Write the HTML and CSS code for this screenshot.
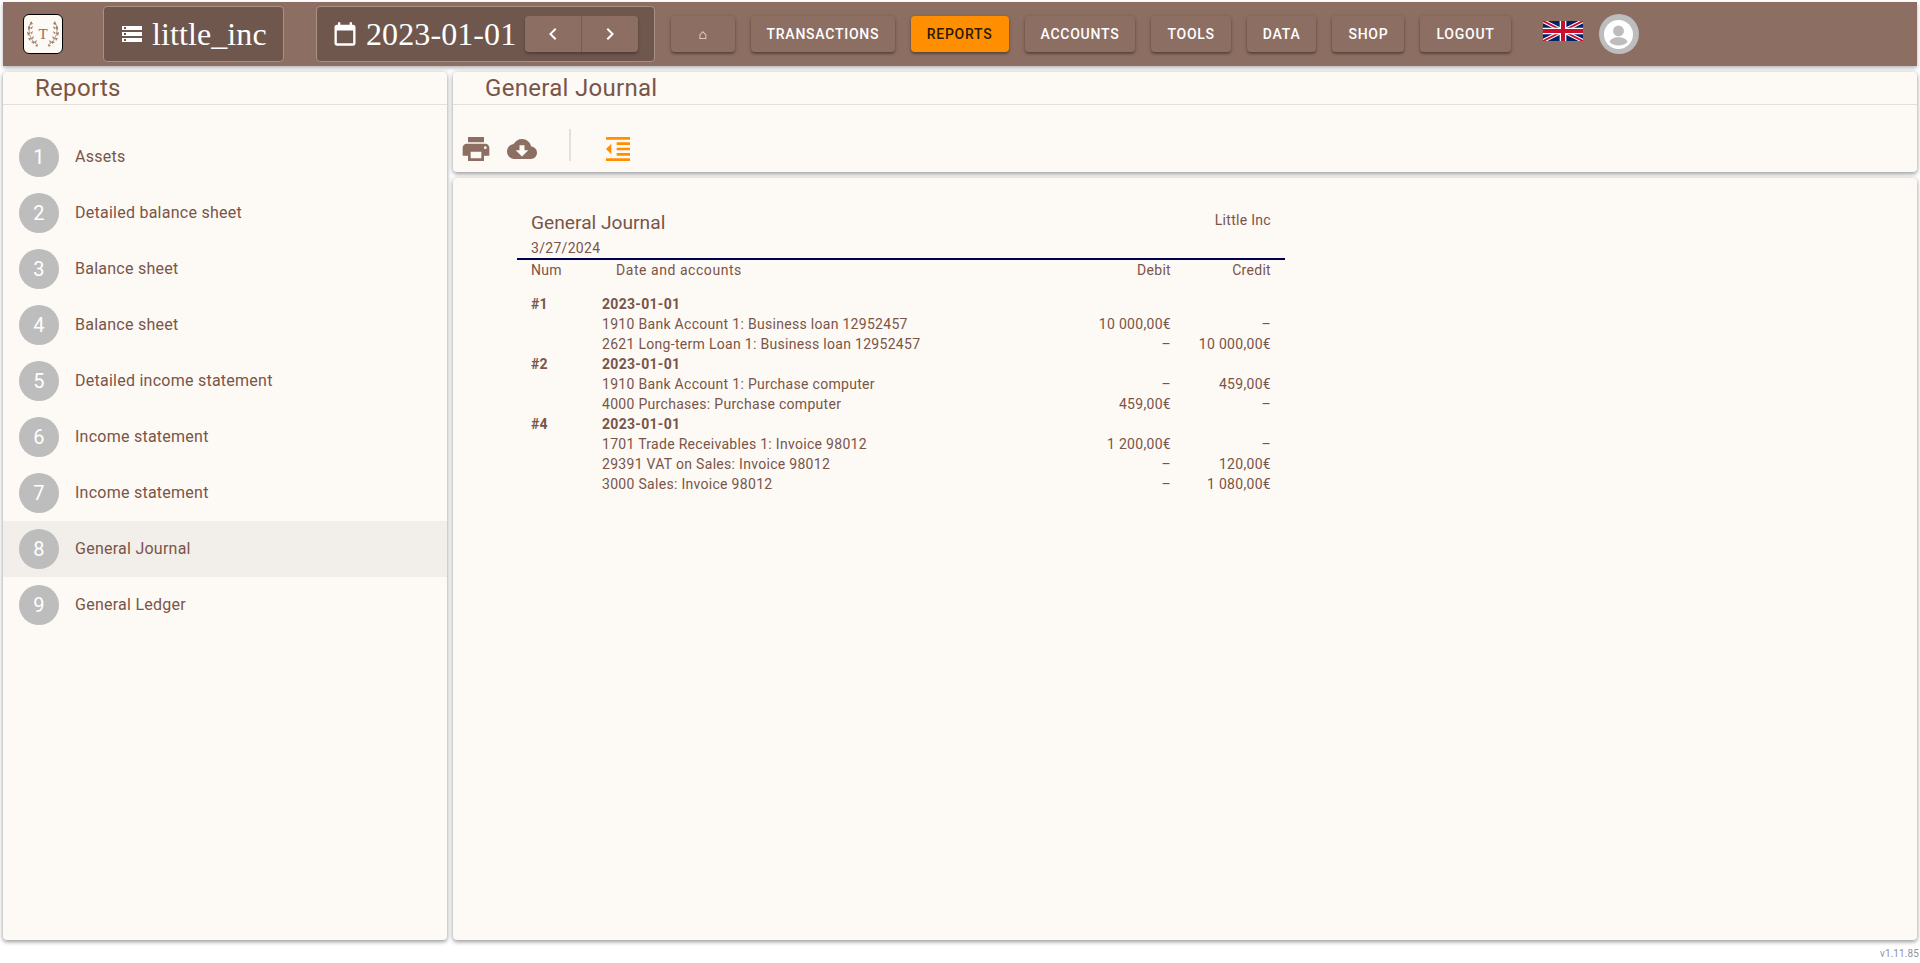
FILE: index.html
```html
<!DOCTYPE html>
<html lang="en">
<head>
  <meta charset="UTF-8" />
  <title>Reports | little_inc</title>
  <link rel="stylesheet" href="styles.css">
</head>
<body>

  <!-- Top bar -->
  <header class="topbar">
    <div class="logo">
      <svg width="38" height="38" viewBox="0 0 38 38">
        <g class="wreath-stem">
          <path d="M7 7C3 15 5 25 14 30"/>
          <path d="M31 7C35 15 33 25 24 30"/>
        </g>
        <g class="wreath-leaf">
          <path d="M7 6l2 3-3 1zM4 11l3 2-3 2zM9 11l-1 3-2-1zM3 17l3 1-2 3zM9 16l-1 3-2-1zM4 23l3 0-1 3zM10 21l-1 3-2-1zM7 27l3-1 0 3zM13 25l-1 3-2-1zM11 30l3 0-1 2z"/>
          <path d="M31 6l-2 3 3 1zM34 11l-3 2 3 2zM29 11l1 3 2-1zM35 17l-3 1 2 3zM29 16l1 3 2-1zM34 23l-3 0 1 3zM28 21l1 3 2-1zM31 27l-3-1 0 3zM25 25l1 3 2-1zM27 30l-3 0 1 2z"/>
        </g>
        <text x="19" y="23.5" class="logo-t">T</text>
      </svg>
    </div>

    <div class="dark-box company">
      <svg class="box-icon" width="24" height="24" viewBox="0 0 24 24"><path d="M2 20h20v-4H2v4zm2-3h2v2H4v-2zM2 4v4h20V4H2zm4 3H4V5h2v2zm-4 7h20v-4H2v4zm2-3h2v2H4v-2z"/></svg>
      <span>little_inc</span>
    </div>

    <div class="dark-box period">
      <svg class="box-icon" width="28" height="28" viewBox="0 0 24 24"><path d="M19 4h-1V2h-2v2H8V2H6v2H5c-1.1 0-2 .9-2 2v14c0 1.1.9 2 2 2h14c1.1 0 2-.9 2-2V6c0-1.1-.9-2-2-2zm0 16H5V9h14v11z"/></svg>
      <span>2023-01-01</span>
      <div class="stepper">
        <button class="step"><svg width="24" height="24" viewBox="0 0 24 24"><path d="M15.4 7.4L14 6l-6 6 6 6 1.4-1.4L10.8 12z"/></svg></button>
        <button class="step"><svg width="24" height="24" viewBox="0 0 24 24"><path d="M10 6L8.6 7.4l4.6 4.6-4.6 4.6L10 18l6-6z"/></svg></button>
      </div>
    </div>

    <nav class="nav">
      <button class="nav-btn home">⌂</button>
      <button class="nav-btn tight">Transactions</button>
      <button class="nav-btn active">Reports</button>
      <button class="nav-btn">Accounts</button>
      <button class="nav-btn">Tools</button>
      <button class="nav-btn">Data</button>
      <button class="nav-btn">Shop</button>
      <button class="nav-btn">Logout</button>
    </nav>

    <svg class="flag" width="40" height="20" viewBox="0 0 60 30">
      <rect width="60" height="30" fill="#012169"/>
      <path d="M0 0L60 30M60 0L0 30" stroke="#fff" stroke-width="6"/>
      <path d="M0 0L60 30M60 0L0 30" stroke="#c8102e" stroke-width="3"/>
      <path d="M30 0V30M0 15H60" stroke="#fff" stroke-width="10"/>
      <path d="M30 0V30M0 15H60" stroke="#c8102e" stroke-width="6"/>
    </svg>

    <div class="avatar">
      <svg width="29" height="29" viewBox="0 0 32 32">
        <circle cx="16" cy="16" r="16" fill="#fff"/>
        <circle cx="16" cy="12" r="6" fill="#bdbdbd"/>
        <path d="M6 24c2-4 6-5 10-5s8 1 10 5c-2 3-6 4-10 4s-8-1-10-4z" fill="#bdbdbd"/>
      </svg>
    </div>
  </header>

  <main class="workspace">

    <!-- Report list -->
    <aside class="panel side">
      <h2 class="panel-title">Reports</h2>
      <ul class="report-list">
        <li class="report-item"><span class="num">1</span><span class="item-label">Assets</span></li>
        <li class="report-item"><span class="num">2</span><span class="item-label">Detailed balance sheet</span></li>
        <li class="report-item"><span class="num">3</span><span class="item-label">Balance sheet</span></li>
        <li class="report-item"><span class="num">4</span><span class="item-label">Balance sheet</span></li>
        <li class="report-item"><span class="num">5</span><span class="item-label">Detailed income statement</span></li>
        <li class="report-item"><span class="num">6</span><span class="item-label">Income statement</span></li>
        <li class="report-item"><span class="num">7</span><span class="item-label">Income statement</span></li>
        <li class="report-item selected"><span class="num">8</span><span class="item-label">General Journal</span></li>
        <li class="report-item"><span class="num">9</span><span class="item-label">General Ledger</span></li>
      </ul>
    </aside>

    <section class="content">
      <div class="panel tools">
        <h2 class="panel-title">General Journal</h2>
        <div class="toolbar">
          <svg class="tool print" width="32" height="32" viewBox="0 0 24 24"><path d="M19 8H5c-1.66 0-3 1.34-3 3v6h4v4h12v-4h4v-6c0-1.66-1.34-3-3-3zm-3 11H8v-5h8v5zm3-7c-.55 0-1-.45-1-1s.45-1 1-1 1 .45 1 1-.45 1-1 1zm-1-9H6v4h12V3z"/></svg>
          <svg class="tool cloud" width="30" height="30" viewBox="0 0 24 24"><path d="M19.35 10.04C18.67 6.59 15.64 4 12 4 9.11 4 6.6 5.64 5.35 8.04 2.34 8.36 0 10.91 0 14c0 3.31 2.69 6 6 6h13c2.76 0 5-2.24 5-5 0-2.64-2.05-4.78-4.65-4.96zM17 13l-5 5-5-5h3V9h4v4h3z"/></svg>
          <span class="tool-sep"></span>
          <svg class="tool outdent" width="32" height="32" viewBox="0 0 24 24"><path d="M11 17h10v-2H11v2zm-8-5l4 4V8l-4 4zm0 9h18v-2H3v2zM3 3v2h18V3H3zm8 6h10V7H11v2zm0 4h10v-2H11v2z"/></svg>
        </div>
      </div>

      <div class="panel sheet">
        <div class="report">
          <div class="report-head">
            <div>
              <div class="report-title">General Journal</div>
              <div class="report-date">3/27/2024</div>
            </div>
            <div class="report-org">Little Inc</div>
          </div>
          <div class="report-row columns">
            <span>Num</span><span class="accounts-head">Date and accounts</span><span class="amt">Debit</span><span class="amt">Credit</span>
          </div>
          <div class="report-body">
            <div class="report-row entry"><span>#1</span><span>2023-01-01</span><span></span><span></span></div>
            <div class="report-row"><span></span><span>1910 Bank Account 1: Business loan 12952457</span><span class="amt">10 000,00€</span><span class="amt">–</span></div>
            <div class="report-row"><span></span><span>2621 Long-term Loan 1: Business loan 12952457</span><span class="amt">–</span><span class="amt">10 000,00€</span></div>
            <div class="report-row entry"><span>#2</span><span>2023-01-01</span><span></span><span></span></div>
            <div class="report-row"><span></span><span>1910 Bank Account 1: Purchase computer</span><span class="amt">–</span><span class="amt">459,00€</span></div>
            <div class="report-row"><span></span><span>4000 Purchases: Purchase computer</span><span class="amt">459,00€</span><span class="amt">–</span></div>
            <div class="report-row entry"><span>#4</span><span>2023-01-01</span><span></span><span></span></div>
            <div class="report-row"><span></span><span>1701 Trade Receivables 1: Invoice 98012</span><span class="amt">1 200,00€</span><span class="amt">–</span></div>
            <div class="report-row"><span></span><span>29391 VAT on Sales: Invoice 98012</span><span class="amt">–</span><span class="amt">120,00€</span></div>
            <div class="report-row"><span></span><span>3000 Sales: Invoice 98012</span><span class="amt">–</span><span class="amt">1 080,00€</span></div>
          </div>
        </div>
      </div>
    </section>
  </main>

  <footer class="version">v1.11.85</footer>

</body>
</html>
```

FILE: styles.css
```css
* {
  box-sizing: border-box;
}

html, body {
  margin: 0;
  padding: 0;
  height: 100%;
  overflow: hidden;
  background: #fff;
  color: #795548;
  font-family: Roboto, sans-serif;
}

body {
  padding: 2px 3px 0;
}

/* Top bar */
.topbar {
  display: flex;
  align-items: center;
  height: 64px;
  padding-left: 20px;
  background: #8d6e63;
  box-shadow: 0 2px 4px rgba(0, 0, 0, 0.3);
}

.logo {
  width: 40px;
  height: 40px;
  margin-right: 40px;
  border: 1px solid #000;
  border-radius: 6px;
  background: #fdf9f5;
}

.logo svg {
  display: block;
}

.wreath-stem {
  fill: none;
  stroke: #9c7f6c;
  stroke-width: 0.8;
}

.wreath-leaf {
  fill: #9c7f6c;
}

.logo-t {
  font-family: "Liberation Serif", serif;
  font-size: 15px;
  fill: #8d6e63;
  text-anchor: middle;
}

.dark-box {
  display: flex;
  align-items: center;
  height: 56px;
  border: 1px solid #a99085;
  border-radius: 4px;
  background: #6f574d;
  color: #fff;
  font-family: "Liberation Serif", serif;
  font-size: 32px;
}

.box-icon {
  fill: #fff;
}

.company {
  width: 181px;
  padding-left: 16px;
  margin-right: 32px;
}

.company span {
  margin-left: 8px;
  letter-spacing: 0.1px;
}

.period {
  width: 339px;
  padding-left: 14px;
  margin-right: 16px;
}

.period span {
  margin-left: 7px;
  letter-spacing: 0.1px;
}

.stepper {
  display: flex;
  margin-left: 9px;
  border-radius: 4px;
  box-shadow: 0 2px 3px rgba(0, 0, 0, 0.3);
}

.step {
  display: flex;
  align-items: center;
  justify-content: center;
  width: 57px;
  height: 36px;
  padding: 0;
  border: none;
  background: #8d6e63;
}

.step:first-child {
  border-right: 1px solid #795a4f;
  border-radius: 4px 0 0 4px;
}

.step:last-child {
  width: 56px;
  border-radius: 0 4px 4px 0;
}

.step svg {
  fill: #fff;
}

.nav {
  display: flex;
  gap: 16px;
}

.nav-btn {
  height: 36px;
  padding: 0 16px;
  border: none;
  border-radius: 4px;
  background: #8d6e63;
  color: #fff;
  font-family: Roboto, sans-serif;
  font-size: 14px;
  font-weight: 500;
  letter-spacing: 0.75px;
  text-transform: uppercase;
  box-shadow: 0 2px 2px rgba(0, 0, 0, 0.25), 0 1px 4px rgba(0, 0, 0, 0.2);
}

.nav-btn.home {
  width: 64px;
}

.nav-btn.tight {
  padding: 0 15.5px;
}

.nav-btn.active {
  background: #ff8f00;
  color: #2b1a05;
}

.flag {
  margin-left: 32px;
  margin-top: -6px;
}

.avatar {
  display: flex;
  align-items: center;
  justify-content: center;
  width: 40px;
  height: 40px;
  margin-left: 16px;
  border-radius: 50%;
  background: #bdbdbd;
}

/* Panels */
.workspace {
  display: grid;
  grid-template-columns: 444px 1fr;
  gap: 6px;
  height: 868px;
  margin-top: 6px;
}

.panel {
  background: #fdf9f5;
  border-radius: 4px;
  box-shadow: 0 2px 4px rgba(0, 0, 0, 0.35), 0 0 5px rgba(0, 0, 0, 0.12);
}

.panel-title {
  height: 33px;
  margin: 0;
  padding-left: 32px;
  border-bottom: 1px solid #e3e0dc;
  font-size: 24px;
  font-weight: 400;
  letter-spacing: 0.3px;
  line-height: 32px;
}

.report-list {
  list-style: none;
  margin: 24px 0 0;
  padding: 0;
}

.report-item {
  display: flex;
  align-items: center;
  height: 56px;
  padding-left: 16px;
  font-size: 16px;
  letter-spacing: 0.25px;
}

.report-item.selected {
  background: #f2eeea;
}

.item-label {
  margin-top: -2px;
}

.num {
  display: flex;
  align-items: center;
  justify-content: center;
  width: 40px;
  height: 40px;
  margin-right: 16px;
  border-radius: 50%;
  background: #bdbdbd;
  color: #fff;
  font-size: 20px;
}

.content {
  display: flex;
  flex-direction: column;
  gap: 6px;
}

.tools {
  height: 100px;
}

.toolbar {
  display: flex;
  align-items: center;
  height: 67px;
  padding-left: 7px;
  padding-top: 20px;
}

.tool {
  fill: #8d6e63;
}

.tool.cloud {
  margin-left: 15px;
}

.tool-sep {
  width: 2px;
  height: 32px;
  margin: -7px 31px 0 32px;
  background: #e3e0dc;
}

.tool.outdent {
  fill: #ff8f00;
}

.sheet {
  flex: 1;
  padding: 33px 0 0 64px;
}

/* Journal */
.report {
  width: 768px;
  font-size: 14px;
  letter-spacing: 0.3px;
}

.report-head {
  display: flex;
  justify-content: space-between;
  align-items: flex-start;
  height: 49px;
  padding: 0 14px;
  border-bottom: 2px solid #000050;
}

.report-title {
  margin-top: -2px;
  font-size: 19.2px;
  letter-spacing: 0;
  line-height: 28px;
}

.report-date {
  margin-top: 1px;
  line-height: 20px;
}

.report-org {
  margin-top: -1px;
  line-height: 20px;
}

.report-row {
  display: grid;
  grid-template-columns: 71px 1fr 100px 100px;
  height: 20px;
  padding: 0 14px;
  line-height: 20px;
}

.columns {
  height: 34px;
}

.accounts-head {
  margin-left: 14px;
  letter-spacing: 0.55px;
}

.amt {
  text-align: right;
}

.entry {
  font-weight: 700;
}

.version {
  margin-top: 8px;
  margin-right: -2px;
  text-align: right;
  font-size: 10px;
  color: #8f9399;
  letter-spacing: 0.1px;
}
```
